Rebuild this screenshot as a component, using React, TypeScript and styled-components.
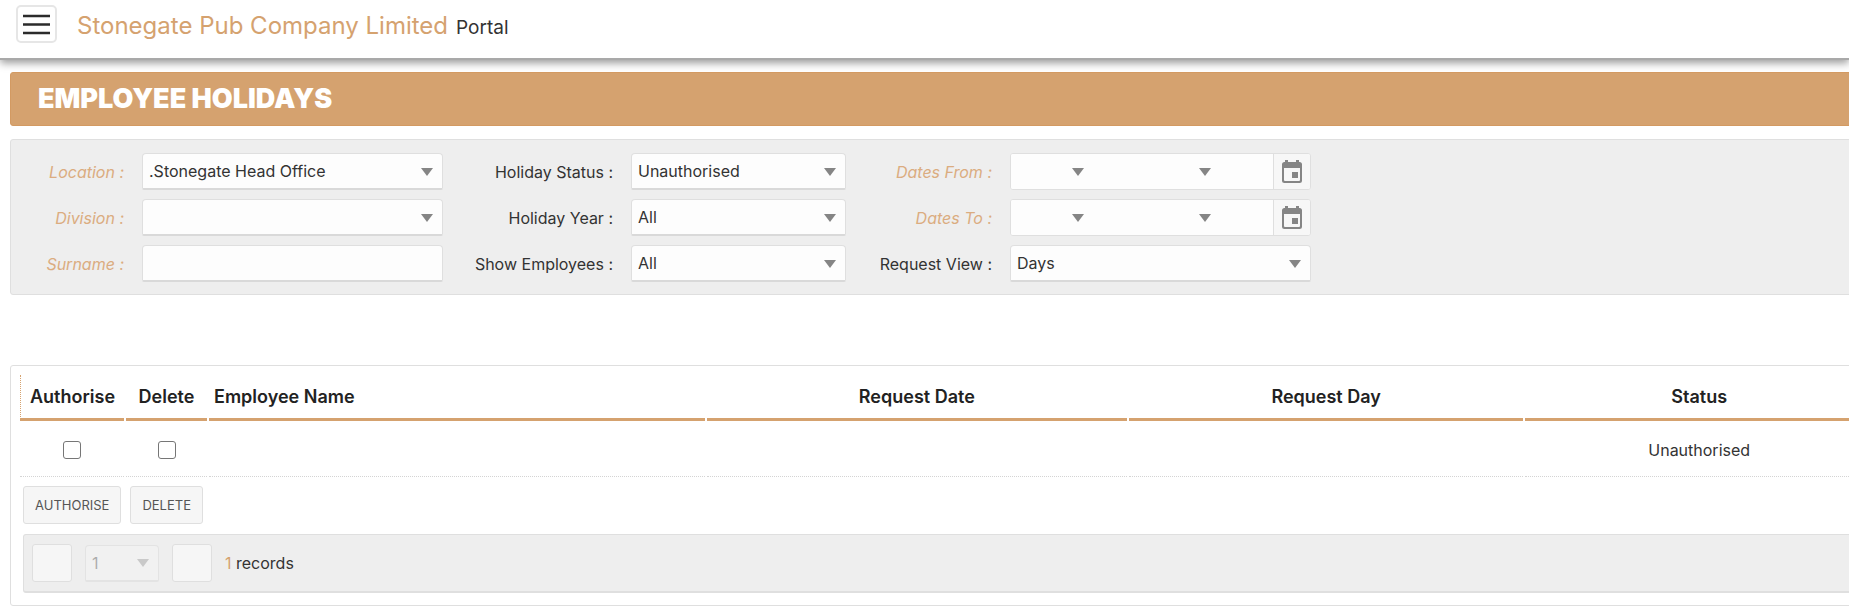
import React from 'react';
import styled, { createGlobalStyle, css } from 'styled-components';

const accent = '#d5a26f';
const line = '#dfdfdf';

const GlobalStyle = createGlobalStyle`
  *, *::before, *::after { box-sizing: border-box; }
  body {
    margin: 0;
    background: #fff;
    color: #333;
    font-family: Inter, "Liberation Sans", sans-serif;
    font-size: 16px;
    line-height: 20px;
    overflow-x: hidden;
  }
  button, input, select { font: inherit; color: inherit; margin: 0; }
`;

const Header = styled.header`
  display: flex;
  align-items: flex-start;
  gap: 20px;
  height: 60px;
  padding: 5px 16px;
  border-bottom: 2px solid #a9a9a9;
  box-shadow: 0 3px 8px rgba(0, 0, 0, 0.4);
`;

const MenuButton = styled.button`
  display: grid;
  place-items: center;
  width: 41px;
  height: 38px;
  padding: 0;
  background: #fff;
  border: 2px solid #e6e6e6;
  border-radius: 5px;
`;

const Brand = styled.div`
  display: flex;
  align-items: baseline;
  gap: 8px;
  font-size: 19px;
  line-height: 42px;
`;

const Company = styled.span`
  color: ${accent};
  font-size: 24px;
`;

/* The working area is wider than the window, so its right edge runs off screen. */
const Clip = styled.main`
  overflow: hidden;
  padding: 12px 0 3px 10px;
`;

const Page = styled.div`
  width: calc(100% + 36px);
`;

const Banner = styled.h1`
  margin: 0 0 13px;
  padding: 0 27px;
  background: ${accent};
  border: 1px solid #d39a62;
  border-radius: 3px;
  color: #fff;
  font-size: 27px;
  font-weight: 900;
  line-height: 52px;
  text-transform: uppercase;
`;

const Filters = styled.form`
  display: grid;
  grid-template-columns: 113px 301px 152px 215px 128px 301px;
  grid-auto-rows: 37px;
  gap: 9px 18px;
  align-items: center;
  padding: 13px 0 12px;
  margin-bottom: 70px;
  background: #eee;
  border: 1px solid ${line};
  border-radius: 3px;
`;

const Label = styled.label<{ $optional?: boolean }>`
  text-align: right;
  ${(p) => p.$optional && css`
    color: #dbac80;
    font-style: italic;
  `}
`;

const fieldBox = css`
  width: 100%;
  height: 37px;
  padding: 0 6px;
  background: #fdfdfd;
  border: 1px solid ${line};
  border-bottom: 2px solid #d9d9d9;
  border-radius: 4px 4px 2px 2px;
`;

const TextInput = styled.input`
  ${fieldBox}
`;

const SelectWrap = styled.div<{ $disabled?: boolean; $width?: number }>`
  position: relative;
  width: ${(p) => (p.$width ? `${p.$width}px` : '100%')};
  opacity: ${(p) => (p.$disabled ? 0.35 : 1)};
`;

const NativeSelect = styled.select<{ $bare?: boolean }>`
  ${fieldBox}
  appearance: none;
  opacity: 1;
  ${(p) => p.$bare && css`
    height: 35px;
    border: 0;
    border-radius: 0;
  `}
  ${(p) => p.disabled && css`
    background: #f7f7f7;
    border-color: #d0d0d0;
  `}
`;

const Arrow = styled.svg`
  position: absolute;
  right: 10px;
  top: 50%;
  width: 12px;
  height: 8px;
  margin-top: -4px;
  fill: #858585;
  pointer-events: none;
`;

const DateGroup = styled.div`
  display: flex;
  height: 37px;
  background: #fdfdfd;
  border: 1px solid ${line};
  border-radius: 3px;
  overflow: hidden;
`;

const YearInput = styled.input`
  flex: 1;
  min-width: 0;
  padding: 0 6px;
  background: transparent;
  border: 0;
`;

const CalendarButton = styled.button`
  display: grid;
  place-items: center;
  width: 37px;
  padding: 0;
  background: #f7f7f7;
  border: 0;
  border-left: 1px solid ${line};
`;

const Results = styled.section`
  padding: 7px 9px 12px 7px;
  border: 1px solid ${line};
  border-radius: 3px;
`;

const Table = styled.table`
  width: 100%;
  table-layout: fixed;
  border-collapse: separate;
  border-spacing: 2px;
`;

const HeadCell = styled.th<{ $left?: boolean }>`
  height: 46px;
  padding: 0 5px;
  border-bottom: 3px solid ${accent};
  color: #222;
  font-size: 18px;
  font-weight: 600;
  text-align: ${(p) => (p.$left ? 'left' : 'center')};
  white-space: nowrap;
  &:first-child { border-left: 1px dotted ${accent}; }
`;

const Cell = styled.td`
  height: 54px;
  padding: 0 5px;
  border-bottom: 1px dotted #d4d4d4;
  text-align: center;
`;

const Check = styled.input`
  appearance: none;
  display: block;
  width: 18px;
  height: 18px;
  margin: 0 auto;
  background: #fff;
  border: 1px solid #767676;
  border-radius: 3px;
  &:checked { background: ${accent}; }
`;

const Actions = styled.div`
  display: flex;
  gap: 9px;
  padding: 7px 0 10px 5px;
`;

const ActionButton = styled.button`
  height: 38px;
  padding: 0 11px;
  background: #f6f6f6;
  border: 1px solid ${line};
  border-radius: 3px;
  color: #555;
  font-size: 13px;
  text-transform: uppercase;
`;

const Pager = styled.nav`
  display: flex;
  align-items: center;
  gap: 13px;
  margin-left: 5px;
  padding: 9px 8px;
  background: #eee;
  border: 1px solid ${line};
  border-bottom-width: 2px;
  border-radius: 3px;
`;

const PageButton = styled.button`
  width: 40px;
  height: 38px;
  background: #f6f6f6;
  border: 1px solid ${line};
  border-radius: 3px;
`;

const Count = styled.span`
  color: ${accent};
`;

type SelectProps = {
  id?: string;
  label?: string;
  value?: string;
  bare?: boolean;
  disabled?: boolean;
  width?: number;
};

function Select({ id, label, value = '', bare, disabled, width }: SelectProps) {
  return (
    <SelectWrap $disabled={disabled} $width={width}>
      <NativeSelect id={id} aria-label={label} $bare={bare} disabled={disabled} defaultValue={value}>
        <option value={value}>{value}</option>
      </NativeSelect>
      <Arrow viewBox="0 0 12 8" aria-hidden="true">
        <path d="M0 0h12L6 8z" />
      </Arrow>
    </SelectWrap>
  );
}

function DateField({ id, name }: { id: string; name: string }) {
  return (
    <DateGroup>
      <Select id={id} bare width={83} />
      <Select label={`${name} month`} bare width={127} />
      <YearInput aria-label={`${name} year`} />
      <CalendarButton type="button" aria-label={`${name} calendar`}>
        <svg width="20" height="24" viewBox="0 0 20 24" aria-hidden="true">
          <path
            fill="#858585"
            fillRule="evenodd"
            d="M3 0h3v2h8V0h3v2h.5A2.500 2.500 0 0 1 20 4.500v16a2.500 2.500 0 0 1-2.500 2.500h-15A2.500 2.500 0 0 1 0 20.500v-16A2.500 2.500 0 0 1 2.500 2H3zM2 8v12a1 1 0 0 0 1 1h14a1 1 0 0 0 1-1V8zm8 4h6v6h-6z"
          />
        </svg>
      </CalendarButton>
    </DateGroup>
  );
}

export default function App() {
  return (
    <>
      <GlobalStyle />
      <Header>
        <MenuButton type="button" aria-label="Menu">
          <svg width="27" height="21" viewBox="0 0 27 21" aria-hidden="true">
            <path d="M0 2h27M0 10.500h27M0 19h27" stroke="#2b2b2b" strokeWidth="2.500" />
          </svg>
        </MenuButton>
        <Brand>
          <Company>Stonegate Pub Company Limited</Company>
          <span>Portal</span>
        </Brand>
      </Header>
      <Clip>
        <Page>
          <Banner>Employee Holidays</Banner>
          <Filters>
            <Label $optional htmlFor="location">Location :</Label>
            <Select id="location" value=".Stonegate Head Office" />
            <Label htmlFor="status">Holiday Status :</Label>
            <Select id="status" value="Unauthorised" />
            <Label $optional htmlFor="from">Dates From :</Label>
            <DateField id="from" name="From" />

            <Label $optional htmlFor="division">Division :</Label>
            <Select id="division" />
            <Label htmlFor="year">Holiday Year :</Label>
            <Select id="year" value="All" />
            <Label $optional htmlFor="to">Dates To :</Label>
            <DateField id="to" name="To" />

            <Label $optional htmlFor="surname">Surname :</Label>
            <TextInput id="surname" />
            <Label htmlFor="show">Show Employees :</Label>
            <Select id="show" value="All" />
            <Label htmlFor="view">Request View :</Label>
            <Select id="view" value="Days" />
          </Filters>
          <Results>
            <Table>
              <colgroup>
                <col style={{ width: 104 }} />
                <col style={{ width: 81 }} />
                <col style={{ width: '26.9%' }} />
                <col style={{ width: '22.8%' }} />
                <col style={{ width: '21.4%' }} />
                <col />
              </colgroup>
              <thead>
                <tr>
                  <HeadCell>Authorise</HeadCell>
                  <HeadCell>Delete</HeadCell>
                  <HeadCell $left>Employee Name</HeadCell>
                  <HeadCell>Request Date</HeadCell>
                  <HeadCell>Request Day</HeadCell>
                  <HeadCell>Status</HeadCell>
                </tr>
              </thead>
              <tbody>
                <tr>
                  <Cell><Check type="checkbox" aria-label="Authorise request" /></Cell>
                  <Cell><Check type="checkbox" aria-label="Delete request" /></Cell>
                  <Cell />
                  <Cell />
                  <Cell />
                  <Cell>Unauthorised</Cell>
                </tr>
              </tbody>
            </Table>
            <Actions>
              <ActionButton type="button">Authorise</ActionButton>
              <ActionButton type="button">Delete</ActionButton>
            </Actions>
            <Pager aria-label="Pages">
              <PageButton type="button" aria-label="Previous page" />
              <Select label="Page" value="1" disabled width={74} />
              <PageButton type="button" aria-label="Next page" />
              <span><Count>1</Count> records</span>
            </Pager>
          </Results>
        </Page>
      </Clip>
    </>
  );
}
